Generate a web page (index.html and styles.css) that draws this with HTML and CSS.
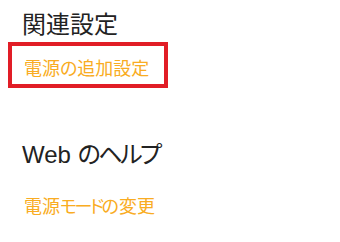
FILE: index.html
```html
<!DOCTYPE html>
<html lang="ja">
<head>
<meta charset="utf-8">
<link rel="stylesheet" href="styles.css">
</head>
<body>
<div class="page">
  <h2 class="heading first">関連設定</h2>
  <div class="highlight"><a class="link">電源の追加設定</a></div>
  <h2 class="heading web">Web <span class="jp">のヘルプ</span></h2>
  <a class="link second">電源<span class="kana">モード</span>の変更</a>
</div>
</body>
</html>
```
FILE: styles.css
```css
html, body {
  margin: 0;
  padding: 0;
  background: #ffffff;
}
.page {
  width: 340px;
  height: 242px;
  display: flex;
  flex-direction: column;
  align-items: flex-start;
  font-family: "Segoe UI", "Liberation Sans", "Noto Sans CJK JP", sans-serif;
}
.heading {
  margin: 0 0 0 22px;
  font-size: 24px;
  line-height: 24px;
  font-weight: 400;
  color: #222222;
  font-feature-settings: "palt";
}
.jp {
  letter-spacing: -2.5px;
}
.first {
  margin-top: 13px;
}
.highlight {
  box-sizing: border-box;
  width: 160px;
  height: 46px;
  margin: 5px 0 0 8px;
  border: 4px solid #e11d26;
  padding: 12px 0 0 12px;
}
.link {
  display: block;
  font-family: "Noto Sans CJK JP", sans-serif;
  font-size: 18px;
  line-height: 18px;
  color: #f9ac22;
  font-feature-settings: "palt";
  white-space: nowrap;
}
.kana {
  letter-spacing: -2.5px;
}
.web {
  margin-top: 55px;
}
.second {
  margin: 29px 0 0 24px;
}
```
